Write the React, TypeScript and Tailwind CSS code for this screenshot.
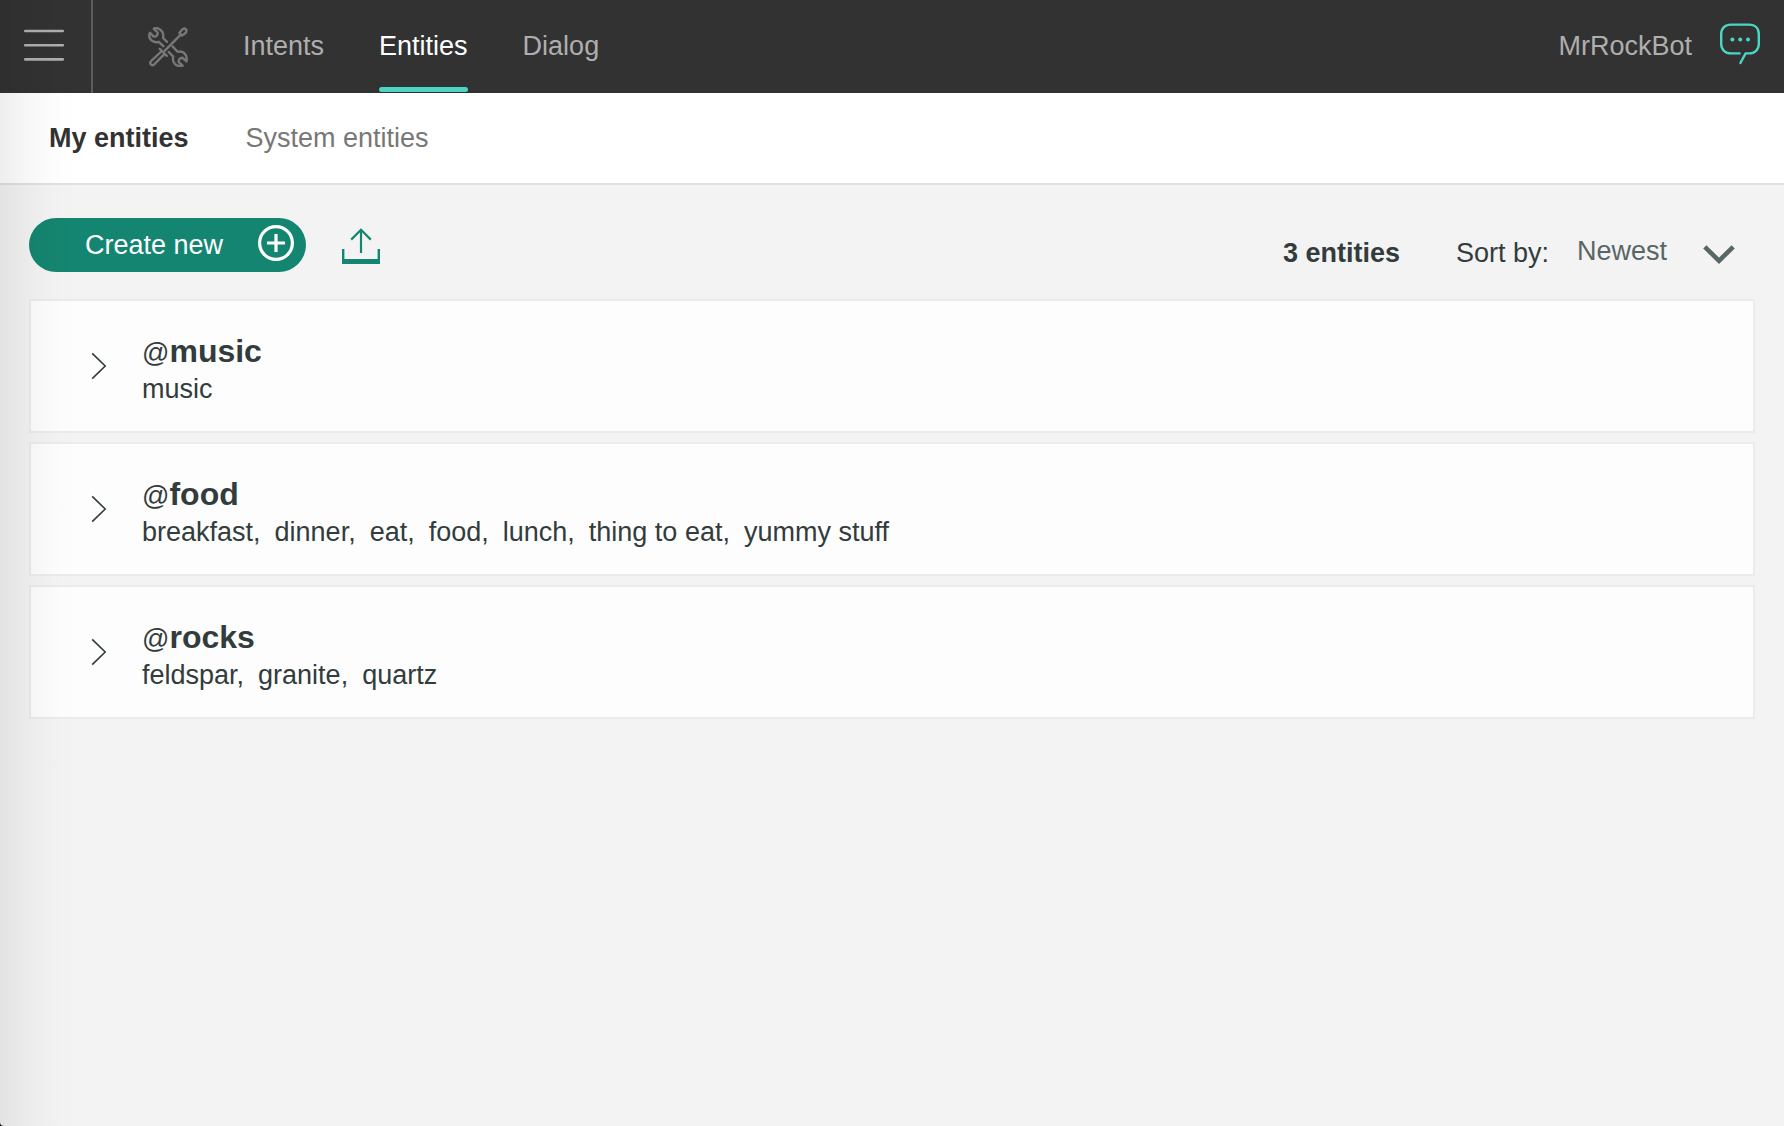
import React, { useState } from "react";

const entities = [
  { name: "music", values: ["music"] },
  {
    name: "food",
    values: ["breakfast", "dinner", "eat", "food", "lunch", "thing to eat", "yummy stuff"],
  },
  { name: "rocks", values: ["feldspar", "granite", "quartz"] },
];

function MenuIcon() {
  return (
    <svg width="40" height="32" viewBox="0 0 40 32" stroke="#aeaeae" strokeWidth="2.6" strokeLinecap="round" aria-hidden="true">
      <path d="M1.2 2H38.8M1.2 16.2H38.8M1.2 30.4H38.8" />
    </svg>
  );
}

function ToolsIcon() {
  return (
    <svg width="40" height="40" viewBox="0 0 40 40" fill="none" stroke="#777777" strokeWidth="2.4" strokeLinecap="round" strokeLinejoin="round" aria-hidden="true">
      <path d="M19 14.8L15 11C15.8 7.4 14.2 3.6 10.8 1.8C9 0.9 7 1 5.8 1.8L9.4 5.2C10.2 7.8 8.4 10 5.8 9.6L2 5.8C0.8 8.2 1.2 11.2 3.2 13.2C5.4 15.2 8.4 15.6 10.8 14.8L15.4 19.2" />
      <path d="M24.6 19.4L29.6 24.8C32.4 24.2 35.4 25 37.2 27.2C38.8 29.4 39 32 38.4 34.4L34.6 30.8C32 30.6 30.2 32.6 30.8 35.2L34.6 38.6C32 39.4 28.8 38.8 26.8 36.8C25 34.8 24.6 32 25.2 29.6L20.8 25" />
      <path d="M16.6 23.8L33 7.4M31.4 6L34.2 2.4L36.8 1.4L38.6 3.2L37.8 5.8L34.2 8.6Z" />
      <path d="M11.8 21.8L18.8 28.8M13.8 24L3 34.2C1 36.4 3.8 39.6 6.2 37.4L16.6 26.8" />
    </svg>
  );
}

function ChatIcon() {
  return (
    <svg width="40" height="42" viewBox="0 0 40 42" fill="none" stroke="#4ad5c5" strokeWidth="2.4" strokeLinecap="round" strokeLinejoin="round" aria-hidden="true">
      <path d="M19.6 30.4H11C5.2 30.4 1.2 26.6 1.2 21V11C1.2 5.2 5.2 1.6 11 1.6H29C34.8 1.6 38.8 5.2 38.8 11V21C38.8 26.6 34.8 30.4 29 30.4H25.6L20.4 40" />
      <g fill="#4ad5c5" stroke="none">
        <circle cx="12.4" cy="16.4" r="2" />
        <circle cx="20.2" cy="16.4" r="2" />
        <circle cx="28" cy="16.4" r="2" />
      </g>
    </svg>
  );
}

function PlusCircleIcon() {
  return (
    <svg width="36" height="36" viewBox="0 0 36 36" fill="none" stroke="#ffffff" aria-hidden="true">
      <circle cx="18" cy="18" r="16.4" strokeWidth="3.2" />
      <path d="M9 18H27M18 9V27" strokeWidth="3.2" />
    </svg>
  );
}

function UploadIcon() {
  return (
    <svg width="38" height="37" viewBox="0 0 38 37" fill="none" stroke="#148570" aria-hidden="true">
      <path d="M19 25V1.6M9.2 11.6L19 1.8L28.8 11.6" strokeWidth="2.2" />
      <path d="M1.2 21V36M36.8 21V36" strokeWidth="2.4" />
      <path d="M0 33.6H38" strokeWidth="5" />
    </svg>
  );
}

export default function App() {
  const [open, setOpen] = useState<string | null>(null);

  return (
    <div className="min-h-screen bg-black">
      <div className="relative flex min-h-screen flex-col overflow-hidden rounded-bl-[4px] bg-[#f3f3f3] font-['Liberation_Sans',Arial,sans-serif] text-[27px] leading-[31px] text-[#323c3c]">
        <header className="flex h-[93px] items-stretch bg-[#323232] text-[#aeaeae]">
          <button type="button" aria-label="Menu" className="flex w-[93px] items-center border-r-2 border-[#5c5c5c] pb-1 pl-6">
            <MenuIcon />
          </button>
          <nav aria-label="Workspace" className="flex items-stretch gap-[55px] pl-[55px]">
            <a href="#tools" aria-label="Tools" className="flex items-center">
              <ToolsIcon />
            </a>
            <a href="#intents" className="flex items-center">Intents</a>
            <a href="#entities" aria-current="page" className="relative flex items-center text-white">
              Entities
              <span className="absolute inset-x-0 bottom-px h-[5px] rounded-full bg-[#4ad5c5]" />
            </a>
            <a href="#dialog" className="flex items-center">Dialog</a>
          </nav>
          <div className="ml-auto flex items-center gap-7 pr-6">
            <span>MrRockBot</span>
            <button type="button" aria-label="Try it out" className="pb-1.5">
              <ChatIcon />
            </button>
          </div>
        </header>

        <nav aria-label="Entity type" className="flex h-[92px] items-center gap-[57px] border-b-2 border-[#dfe1e1] bg-white pl-[49px]">
          <a href="#my-entities" aria-current="page" className="font-bold text-[#323232]">My entities</a>
          <a href="#system-entities" className="text-[#777777]">System entities</a>
        </nav>

        <main className="px-[29px] pt-[33px]">
          <div className="mb-[27px] flex items-center">
            <button type="button" className="flex h-[54px] items-center gap-[35px] rounded-full bg-[#148570] pl-14 pr-3 text-white">
              Create new
              <span className="pb-1"><PlusCircleIcon /></span>
            </button>
            <button type="button" aria-label="Import entities" className="ml-9 pt-0.5">
              <UploadIcon />
            </button>
            <div className="ml-auto flex items-center pr-5 pt-4">
              <span className="mr-14 font-bold">3 entities</span>
              <label htmlFor="sort">Sort by:</label>
              <div className="relative ml-7 pb-1 text-[#596666]">
                <select id="sort" defaultValue="Newest" className="block w-[158px] appearance-none bg-transparent">
                  <option>Newest</option>
                  <option>Oldest</option>
                </select>
                <svg className="pointer-events-none absolute right-0 top-[9px]" width="32" height="20" viewBox="0 0 32 20" fill="none" stroke="#596666" strokeWidth="4.6" aria-hidden="true">
                  <path d="M1.8 1.8L16 15.8L30.2 1.8" />
                </svg>
              </div>
            </div>
          </div>

          <ul className="flex flex-col gap-[9px]">
            {entities.map((entity) => (
              <li key={entity.name} className="flex items-center border-2 border-[#ebebeb] bg-[#fdfdfd]">
                <button
                  type="button"
                  aria-label={"Expand @" + entity.name}
                  aria-expanded={open === entity.name}
                  onClick={() => setOpen(open === entity.name ? null : entity.name)}
                  className="ml-[60px] mr-[35px]"
                >
                  <svg width="16" height="28" viewBox="0 0 16 28" fill="none" stroke="#323c3c" strokeWidth="1.6" aria-hidden="true">
                    <path d="M1.2 1.4L14.2 14L1.2 26.6" />
                  </svg>
                </button>
                <div className="pb-6 pt-[30px]">
                  <h2 className="text-[32px] font-bold leading-[40px]">
                    <span className="text-[27px] font-normal leading-none">@</span>
                    {entity.name}
                  </h2>
                  <p className="flex flex-wrap gap-x-[14px] leading-[36px]">
                    {entity.values.map((value, i) => (
                      <span key={value}>{i < entity.values.length - 1 ? value + "," : value}</span>
                    ))}
                  </p>
                </div>
              </li>
            ))}
          </ul>
        </main>

        <div className="pointer-events-none absolute inset-y-0 left-0 w-20 bg-[linear-gradient(to_right,rgba(0,0,0,0.065),rgba(0,0,0,0.03)_35%,rgba(0,0,0,0.008)_70%,transparent)]" />
      </div>
    </div>
  );
}
